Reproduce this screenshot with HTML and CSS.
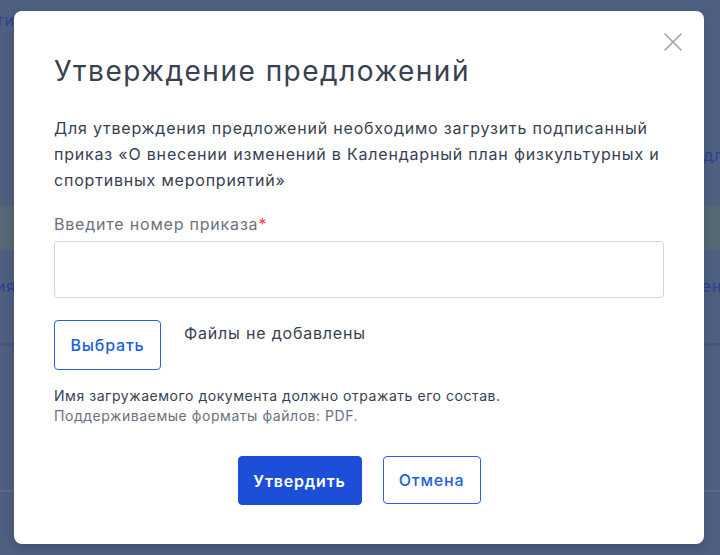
FILE: index.html
```html
<!DOCTYPE html>
<html lang="ru">
<head>
<meta charset="utf-8">
<title>Утверждение предложений</title>
<link rel="stylesheet" href="styles.css">
</head>
<body>
<div class="page">
  <div class="bg-row bg-top"><span class="bg-link">ти</span></div>
  <div class="bg-row bg-r1"><span></span><span class="bg-link">дл</span></div>
  <div class="bg-band"></div>
  <div class="bg-row bg-r2"><span class="bg-link">ия</span><span class="bg-link">ен</span></div>
  <div class="bg-line"></div>
  <div class="bg-block"></div>
  <div class="bg-line2"></div>
</div>

<div class="modal" role="dialog">
  <button class="close" aria-label="Закрыть">
    <svg width="18" height="18" viewBox="0 0 18 18"><path d="M1 1L17 17M17 1L1 17" stroke="#9ca3af" stroke-width="1.6" fill="none" stroke-linecap="round"/></svg>
  </button>
  <h1 class="title">Утверждение предложений</h1>
  <p class="desc">Для утверждения предложений необходимо загрузить подписанный приказ «О внесении изменений в Календарный план физкультурных и спортивных мероприятий»</p>
  <label class="label">Введите номер приказа<span class="req">*</span></label>
  <input class="input" type="text">
  <div class="file-row">
    <button class="btn btn-outline btn-choose">Выбрать</button>
    <span class="file-status">Файлы не добавлены</span>
  </div>
  <div class="hint">
    <div class="hint-main">Имя загружаемого документа должно отражать его состав.</div>
    <div class="hint-sub">Поддерживаемые форматы файлов: PDF.</div>
  </div>
  <div class="actions">
    <button class="btn btn-primary">Утвердить</button>
    <button class="btn btn-outline btn-cancel">Отмена</button>
  </div>
</div>
</body>
</html>
```
FILE: styles.css
```css
* { box-sizing: border-box; }
html, body { margin: 0; padding: 0; }
body {
  width: 720px;
  height: 555px;
  overflow: hidden;
  background: #4f5f80;
  font-family: Inter, "Noto Sans", sans-serif;
  letter-spacing: 0.05em;
  position: relative;
}
.page {
  display: flex;
  flex-direction: column;
}
.bg-row {
  display: flex;
  justify-content: space-between;
  font-size: 16px;
  line-height: 20px;
  color: #2b4190;
}
.bg-link { color: #2c3f94; }
.bg-top { height: 40px; align-items: center; margin-left: -4px; }
.bg-r1 { height: 166px; padding-top: 105px; align-items: flex-start; }
.bg-r1 .bg-link { margin-right: -4px; }
.bg-band { height: 44px; background: #566873; }
.bg-r2 { height: 93px; padding-top: 26px; align-items: flex-start; }
.bg-r2 .bg-link:first-child { margin-left: -4px; }
.bg-r2 .bg-link:last-child { margin-right: -2px; }
.bg-line { height: 3px; background: #46557a; }
.bg-block { height: 144px; }
.bg-line2 { height: 2px; background: #5a6a8a; }

.modal {
  position: absolute;
  left: 14px;
  top: 11px;
  width: 690px;
  height: 533px;
  background: #fff;
  border-radius: 8px;
  padding: 40px;
  color: #374151;
  box-shadow: 0 4px 10px rgba(30, 40, 70, 0.25);
}
.close {
  position: absolute;
  top: 22px;
  right: 22px;
  width: 18px;
  height: 18px;
  padding: 0;
  border: 0;
  background: none;
  display: flex;
}
.title {
  margin: 0;
  font-size: 28px;
  line-height: 40px;
  font-weight: 400;
  letter-spacing: 1.5px;
  color: #374151;
}
.desc {
  margin: 24px 0 0;
  font-size: 16px;
  line-height: 26px;
  color: #374151;
}
.label {
  display: block;
  margin-top: 19px;
  font-size: 16px;
  line-height: 24px;
  color: #6b7280;
}
.req { color: #ef4444; }
.input {
  display: block;
  width: 100%;
  height: 57px;
  margin-top: 5px;
  border: 1px solid #d1d5db;
  border-radius: 4px;
  font: inherit;
}
.file-row {
  display: flex;
  align-items: flex-start;
  gap: 23px;
  margin-top: 22px;
}
.btn {
  font-family: inherit;
  font-size: 16px;
  letter-spacing: 0.05em;
  border-radius: 4px;
  cursor: pointer;
}
.btn-outline {
  background: #fff;
  border: 1px solid #2563eb;
  color: #1d5fe0;
  font-weight: 500;
}
.btn-choose {
  width: 107px;
  height: 50px;
}
.file-status {
  font-size: 16px;
  line-height: 24px;
  color: #374151;
  padding-top: 1px;
}
.hint {
  margin-top: 16px;
  font-size: 14px;
  line-height: 20px;
  letter-spacing: 0.55px;
}
.hint-main { color: #374151; }
.hint-sub { color: #6b7280; }
.actions {
  display: flex;
  justify-content: center;
  gap: 21px;
  margin-top: 30px;
}
.btn-primary {
  width: 124px;
  height: 49px;
  background: #1d4ed8;
  border: 1px solid #1d4ed8;
  color: #fff;
  font-weight: 600;
}
.btn-cancel {
  width: 98px;
  height: 48px;
}
```
